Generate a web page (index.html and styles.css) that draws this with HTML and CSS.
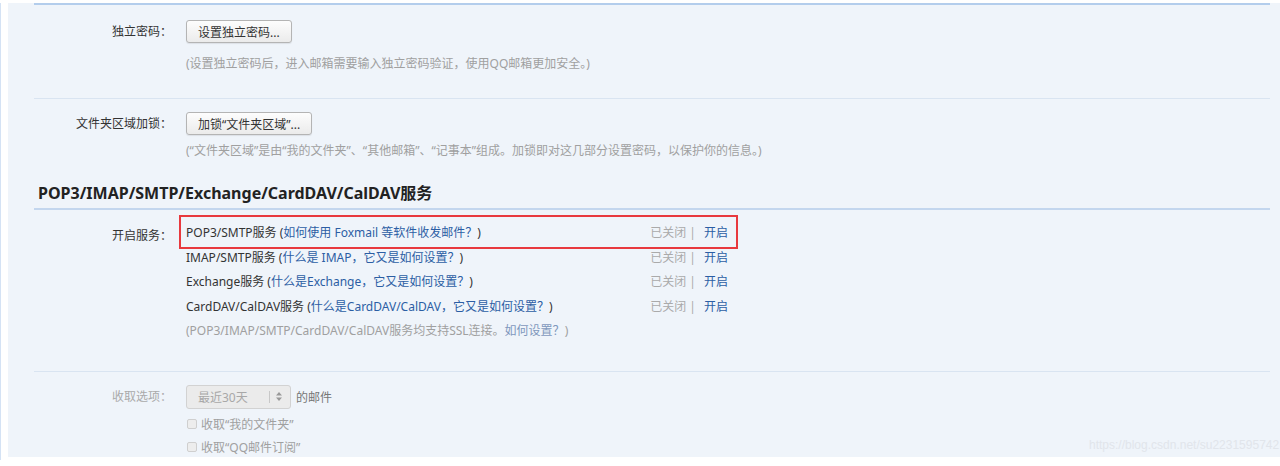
FILE: index.html
```html
<!DOCTYPE html>
<html lang="zh-CN">
<head>
    <meta charset="UTF-8">
    <title>邮箱设置 - 账户</title>
    <link rel="stylesheet" href="styles.css">
</head>
<body>
    <div class="frame">
        <div class="panel">
            <div class="content">

                <div class="block block-pwd">
                    <div class="row">
                        <div class="label">独立密码：</div>
                        <div class="field">
                            <button class="btn">设置独立密码...</button>
                            <p class="tip tip-pwd">(设置独立密码后，进入邮箱需要输入独立密码验证，使用QQ邮箱更加安全。)</p>
                        </div>
                    </div>
                </div>

                <div class="block block-lock">
                    <div class="row">
                        <div class="label">文件夹区域加锁：</div>
                        <div class="field">
                            <button class="btn">加锁“文件夹区域”...</button>
                            <p class="tip tip-lock">(“文件夹区域”是由“我的文件夹”、“其他邮箱”、“记事本”组成。加锁即对这几部分设置密码，以保护你的信息。)</p>
                        </div>
                    </div>
                </div>

                <h2 class="section-title">POP3/IMAP/SMTP/Exchange/CardDAV/CalDAV服务</h2>

                <div class="block block-service">
                    <div class="row">
                        <div class="label label-service">开启服务：</div>
                        <div class="field">
                            <div class="service marked">
                                <span>POP3/SMTP服务 (<a href="#">如何使用 Foxmail 等软件收发邮件？</a>)</span>
                                <span class="status"><span class="off">已关闭</span><span class="sep">|</span><a href="#">开启</a></span>
                            </div>
                            <div class="service">
                                <span>IMAP/SMTP服务 (<a href="#">什么是 IMAP，它又是如何设置？</a>)</span>
                                <span class="status"><span class="off">已关闭</span><span class="sep">|</span><a href="#">开启</a></span>
                            </div>
                            <div class="service">
                                <span>Exchange服务 (<a href="#">什么是Exchange，它又是如何设置？</a>)</span>
                                <span class="status"><span class="off">已关闭</span><span class="sep">|</span><a href="#">开启</a></span>
                            </div>
                            <div class="service">
                                <span>CardDAV/CalDAV服务 (<a href="#">什么是CardDAV/CalDAV，它又是如何设置？</a>)</span>
                                <span class="status"><span class="off">已关闭</span><span class="sep">|</span><a href="#">开启</a></span>
                            </div>
                            <p class="service-tip tip">(POP3/IMAP/SMTP/CardDAV/CalDAV服务均支持SSL连接。<a href="#" class="tip-link">如何设置？</a>)</p>
                        </div>
                    </div>
                </div>

                <div class="block block-receive">
                    <div class="row">
                        <div class="label label-off">收取选项：</div>
                        <div class="field">
                            <div class="select-line">
                                <div class="select">
                                    <span class="select-text">最近30天</span>
                                    <span class="select-arrow">
                                        <svg width="6" height="9" viewBox="0 0 6 9"><path d="M3 0L6 3.5H0z M3 9L0 5.5H6z" fill="#999"/></svg>
                                    </span>
                                </div>
                                <span class="select-after">的邮件</span>
                            </div>
                            <label class="check"><span class="box"></span>收取“我的文件夹”</label>
                            <label class="check"><span class="box"></span>收取“QQ邮件订阅”</label>
                        </div>
                    </div>
                </div>

            </div>
        </div>
        <div class="watermark">https://blog.csdn.net/su2231595742</div>
    </div>
</body>
</html>
```

FILE: styles.css
```css
* {
    margin: 0;
    padding: 0;
    box-sizing: border-box;
}

body {
    background-color: #fff;
    color: #333;
    font-family: "Noto Sans", "Noto Sans CJK SC", sans-serif;
    font-size: 12px;
    overflow: hidden;
}

a {
    color: #2c5ea4;
    text-decoration: none;
}

.frame {
    position: relative;
    height: 457px;
    border-left: 1px solid #d4e2f4;
    padding-left: 7px;
}

.panel {
    margin-top: 3px;
    height: 454px;
    overflow: hidden;
    background-color: #eff4fa;
    padding: 0 10px 0 26px;
}

.content {
    border-top: 2px solid #b3cdec;
}

.row {
    display: flex;
    gap: 14px;
}

.label {
    width: 138px;
    flex-shrink: 0;
    text-align: right;
    line-height: 23px;
    color: #333;
}

.field {
    flex: 1;
}

.btn {
    display: block;
    height: 23px;
    padding: 0 11px;
    font-family: inherit;
    font-size: 12px;
    color: #333;
    background: linear-gradient(180deg, #fdfdfd, #ebebeb);
    border: 1px solid #b4b4b4;
    border-radius: 3px;
    box-shadow: 0 1px 1px rgba(0, 0, 0, 0.08);
}

.tip {
    color: #a0a0a0;
    line-height: 20px;
}

.block-pwd {
    padding: 15px 0 24px;
    border-bottom: 1px solid #d9e4f1;
}

.tip-pwd {
    margin-top: 11px;
}

.block-lock {
    padding: 13px 0 22px;
}

.tip-lock {
    margin-top: 6px;
}

.section-title {
    font-size: 16px;
    font-weight: 700;
    color: #222;
    line-height: 21px;
    padding: 0 0 4px 4px;
    border-bottom: 2px solid #c3d6ee;
}

.block-service {
    padding: 11px 0 27px;
    border-bottom: 1px solid #d9e4f1;
}

.label-service {
    line-height: 24.5px;
    padding-top: 3px;
}

.service {
    display: flex;
    justify-content: space-between;
    width: 542px;
    line-height: 24.5px;
}

.service-tip {
    line-height: 24.5px;
}

.service.marked {
    position: relative;
}

.service.marked::after {
    content: "";
    position: absolute;
    left: -7px;
    right: -10px;
    top: -6px;
    bottom: -3px;
    border: 2px solid #e8393e;
}

.status .off {
    color: #aaa;
}

.status .sep {
    color: #aaa;
    margin: 0 8px 0 3px;
}

.tip-link {
    color: #7f98bd;
}

.block-receive {
    padding-top: 13px;
}

.label-off {
    color: #aaa;
    line-height: 24px;
}

.select-line {
    display: flex;
    align-items: center;
    gap: 5px;
    height: 24px;
}

.select {
    display: flex;
    align-items: center;
    width: 105px;
    height: 24px;
    padding-left: 11px;
    background-color: #ebebeb;
    border: 1px solid #d2d2d2;
    border-radius: 3px;
}

.select-text {
    width: 71px;
    color: #a8a8a8;
}

.select-arrow {
    display: flex;
    align-items: center;
    height: 12px;
    padding-left: 6px;
    border-left: 1px solid #c8c8c8;
}

.select-after {
    color: #777;
}

.check {
    display: flex;
    align-items: center;
    gap: 4px;
    line-height: 23px;
    color: #a0a0a0;
}

.block-receive .check:first-of-type {
    margin-top: 4px;
}

.box {
    width: 10px;
    height: 10px;
    margin-left: 1px;
    border: 1px solid #cfcfcf;
    border-radius: 2px;
    background-color: #ededed;
}

.watermark {
    position: absolute;
    left: 1088px;
    top: 435px;
    font-family: "Liberation Sans", Arial, sans-serif;
    font-size: 12px;
    color: #e1e5eb;
    white-space: nowrap;
}
```
